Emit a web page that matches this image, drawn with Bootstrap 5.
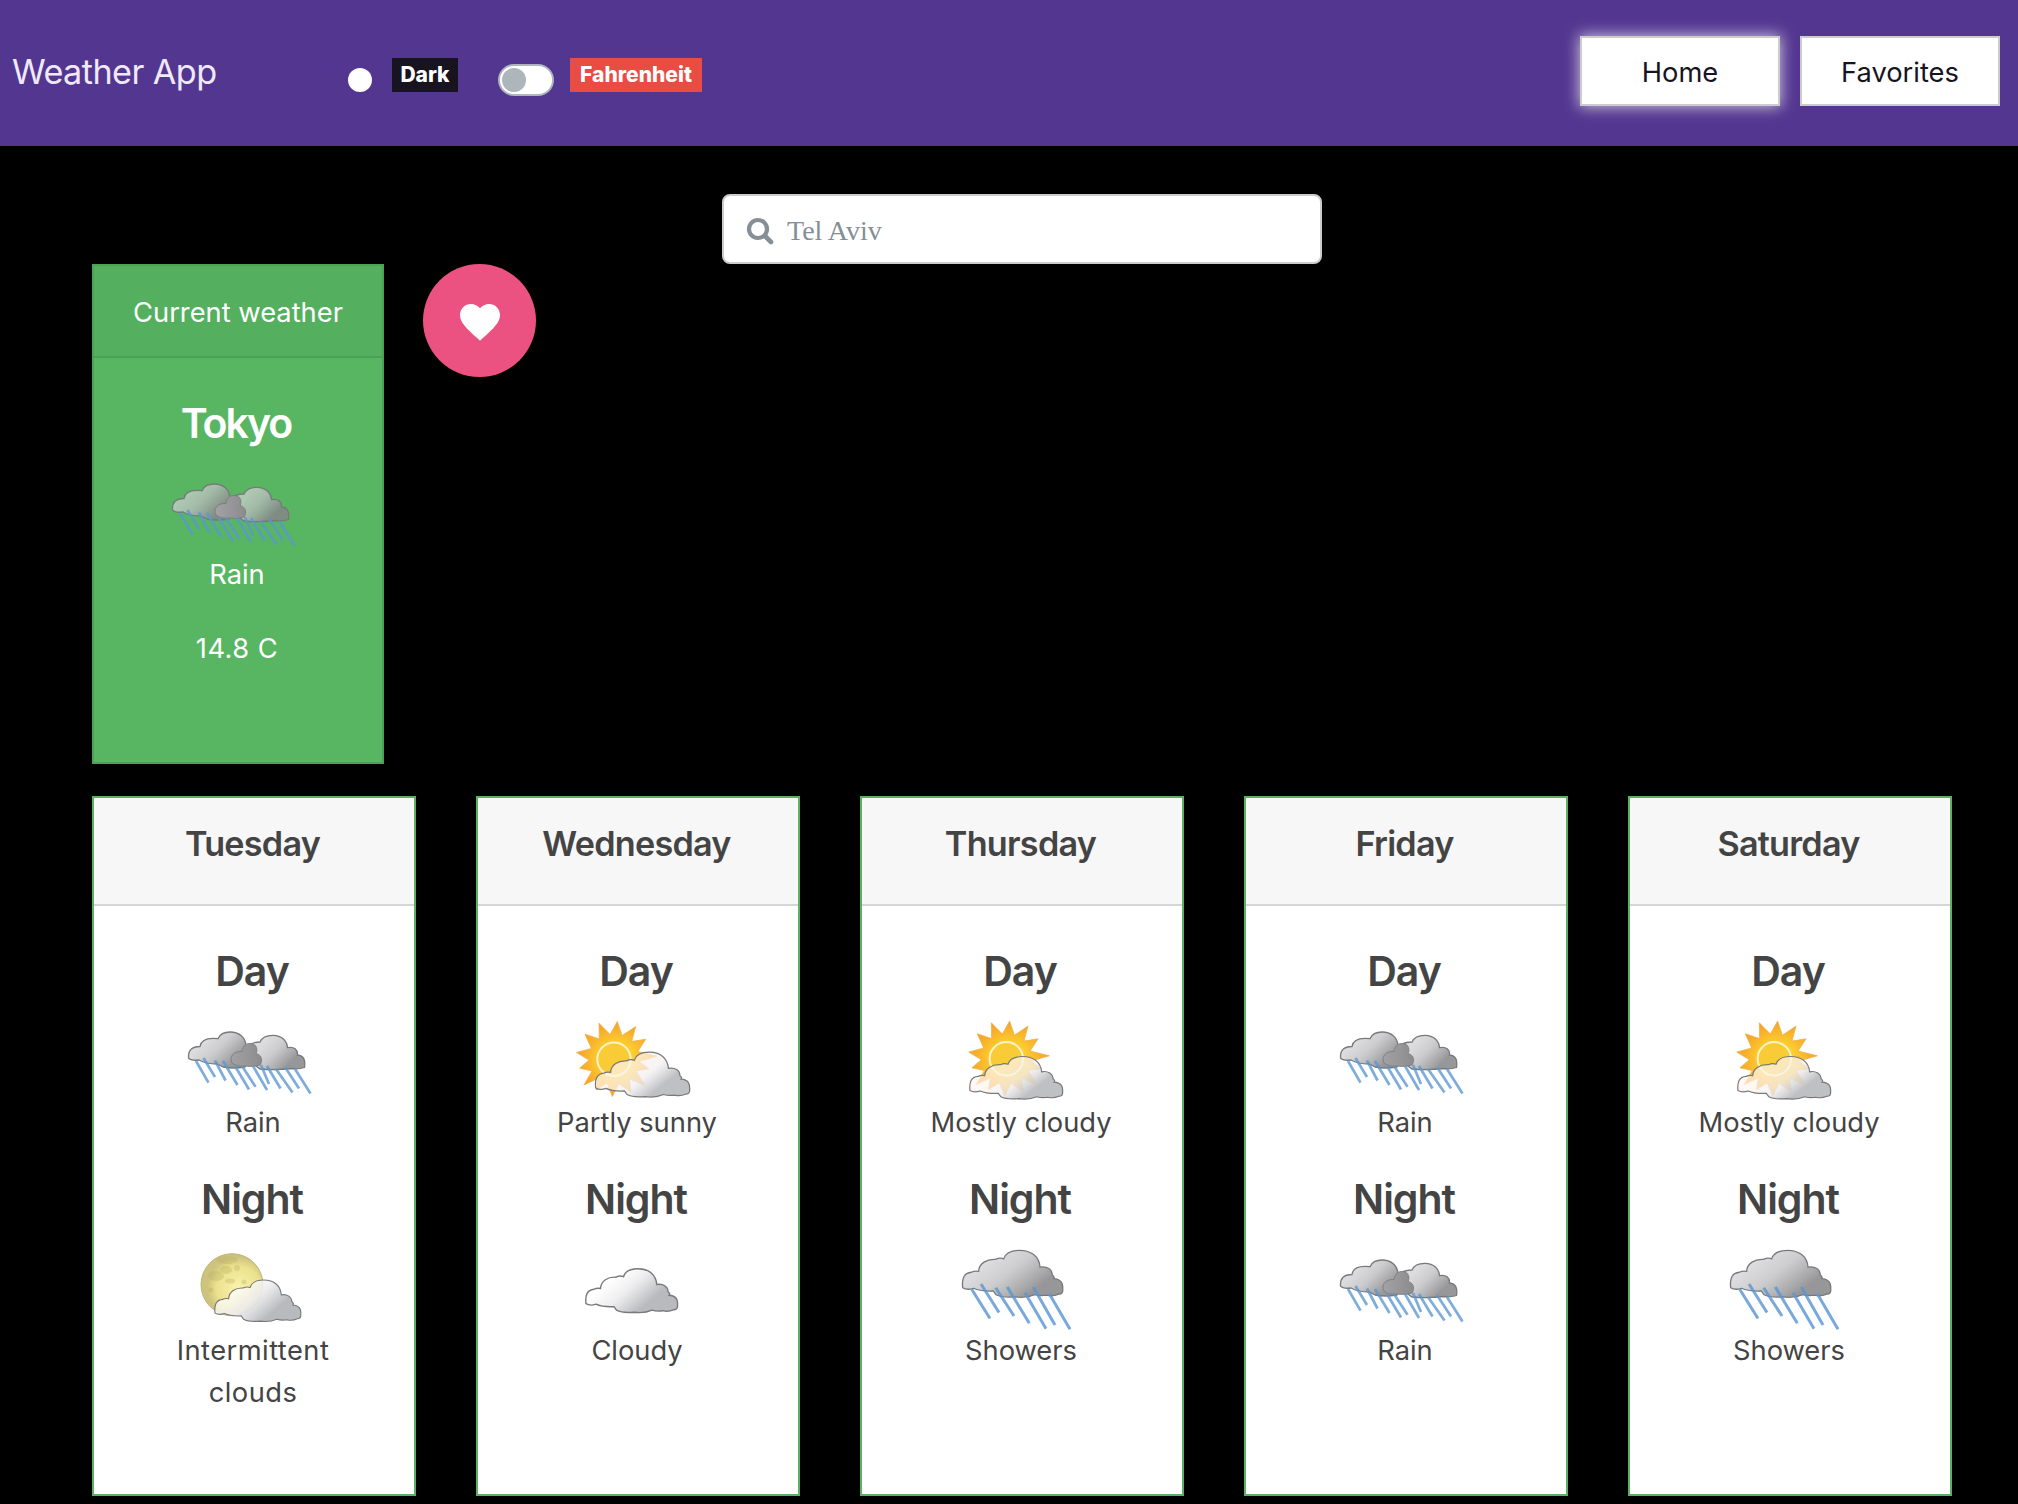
<!DOCTYPE html>
<html lang="en">
<head>
<meta charset="utf-8">
<meta name="viewport" content="width=device-width, initial-scale=1">
<title>Weather App</title>
<link href="https://cdn.jsdelivr.net/npm/bootstrap@5.3.0/dist/css/bootstrap.min.css" rel="stylesheet">
<style>
body{background:#000;font-family:Inter,"Liberation Sans",sans-serif;font-size:27.3px;line-height:42px;color:#444;height:1504px;overflow:hidden}
.top-bar{height:146px;background:#533690;padding:0 18px 0 12px}
.brand-name{font-size:34.2px;color:#efe9fa;width:308px;line-height:42px;margin-bottom:2px;letter-spacing:-.55px;white-space:nowrap}
.toggle-box{width:56px;height:32px;border-radius:16px;border:2px solid #adb5bd;background:#fff;padding:2px;margin-top:14px}
.toggle-box i{display:block;width:24px;height:24px;border-radius:50%;background:#adb5bd}
.toggle-box.on{border-color:#533690;background:#533690}
.toggle-box.on i{background:#fff;margin-left:auto}
.tag{height:34px;line-height:34px;font-size:21px;font-weight:800;color:#fff;border-radius:0;margin-top:4px;margin-left:16px;text-align:center}
.tag-dark{background:#17141f;width:66px;margin-right:40px}
.tag-red{background:#e94c42;width:132px}
.nav-group{gap:20px}
.nav-btn{width:200px;height:70px;border:2px solid #ccc;border-radius:0;background:#fff;color:#17141f;font-size:27.3px;line-height:42px;margin-bottom:4px;padding:3px 0 0}
.nav-btn.glow{box-shadow:0 0 14px 1px rgba(255,255,255,.7)}
.search-box{width:600px;height:70px;margin:48px 0 0 722px;border:2px solid #ccc;border-radius:8px;background:#fff;color:#868e96;font-family:"Liberation Serif",serif;font-size:28px;padding-left:22px}
.search-box svg{margin-top:4px}
.search-text{margin-left:13px;padding-top:4px}
.page-body{padding:0 66px 0 92px}
.now-row{height:508px}
.now-card{width:292px;height:500px;background:#58b662;border:2px solid #4ba257;border-radius:0;color:#fff}
.now-card .card-header{height:92px;padding:26px 0 0;background:#54b05e;border-bottom:2px solid #4ba257;border-radius:0}
.day-card{width:324px;height:700px;border:2px solid #5cb066;border-radius:0;color:#444;background:#fff}
.day-card .card-header{height:108px;padding:25px 3px 0 0;background:#f7f7f7;border-bottom:2px solid #d6d6d6;border-radius:0;font-size:34.2px;font-weight:600;letter-spacing:-.75px}
.card-body{padding:35px 33px 0 31px}
.part-title{font-size:41px;font-weight:600;line-height:50px;margin:0;padding:5px 2px 17px 0;letter-spacing:-1.05px}
.city-title{letter-spacing:-2px}
.wx{display:block;width:150px;height:90px;margin:0 auto -1px;overflow:visible}
.wx-text{margin:0 auto 25px;max-width:200px}
.wx-wide{letter-spacing:.45px}
.now-card .wx-text{margin-bottom:32px}
.fav-btn{width:113px;height:113px;border-radius:50%;background:#eb5282;border:0;margin:-.5px 0 0 39px;padding:3px 0 0}
</style>
</head>
<body>
<svg width="0" height="0" class="position-absolute">
<defs>
<linearGradient id="gWhite" x1="0" y1="0" x2="1" y2=".55"><stop offset=".3" stop-color="#fff" stop-opacity=".72"/><stop offset=".55" stop-color="#ececee" stop-opacity=".9"/><stop offset=".85" stop-color="#b9babd"/></linearGradient>
<linearGradient id="gMist" x1="0" y1="0" x2="1" y2=".6"><stop offset=".4" stop-color="#fff5ef" stop-opacity=".7"/><stop offset=".62" stop-color="#f2f0f2" stop-opacity=".76"/><stop offset=".85" stop-color="#bfc0c3"/></linearGradient>
<linearGradient id="gGrey" x1="0" y1="0" x2="1" y2=".6"><stop offset=".3" stop-color="#cfcfd1" stop-opacity=".72"/><stop offset=".55" stop-color="#bcbcbe" stop-opacity=".75"/><stop offset=".9" stop-color="#858587" stop-opacity=".85"/></linearGradient>
<linearGradient id="gDark" x1="0" y1="0" x2="1" y2="0"><stop offset="0" stop-color="#a2a2a4"/><stop offset="1" stop-color="#8c8c8e"/></linearGradient>
<radialGradient id="gSun"><stop offset=".4" stop-color="#fdd02f"/><stop offset="1" stop-color="#f5a02a"/></radialGradient>
<radialGradient id="gMoon" cx=".6" cy=".55"><stop offset="0" stop-color="#fbf3ad"/><stop offset=".7" stop-color="#ece18d"/><stop offset="1" stop-color="#cdc37c"/></radialGradient>
<path id="cloud" d="M0 35C-1 27 1 21 8 20.500Q11 19 14.500 19.800C15 12 22 8 30 8.500Q34 6.500 37.500 8C39 3 44 0 52 0C63 0 70 6 70.800 15.800C77 14.500 82 18 82 23Q84.500 25 83.200 26.500C90 27 92 31 91.500 36Q92 41 88 41Q82 43.500 77 42Q71 43 66 41.500Q58 45 48 43.500Q36 44.500 30.500 41.500L28 38Q16 38.500 10 35.500Q4 37.500 0 35Z"/>
<symbol id="wx-rain" viewBox="0 0 150 90">
<g stroke="#77797b" stroke-width="1.300">
<path fill="url(#gGrey)" d="M68 34Q72 29 81 29C83 24 88 22.300 94 22.300C103 22.300 108 28 108.500 34.700C115 33 119 37 118.500 42C125 42.500 126.500 47 125.500 54.500Q119 56.500 113 55.500Q97 57.500 81 56L77 53Z"/>
<path fill="url(#gGrey)" d="M9.500 45C9 37 13 33.500 21 33.500C22 27 29 24.500 39 25.700C41 21 46 19 51 19C60 19 66 24 67 32L72 40L66 54Q54 56 44 54L38 51Q27 51 20 47Q12 48 9.500 45Z"/>
<path fill="url(#gDark)" stroke-width=".8" d="M53 50C50 44 54 38 63 38.500C64 32 68 30 72 30.500C78 31 79 37 77 40.500C83 42 84 48 81 52Q73 54.500 66 53Q58 54 53 50Z"/></g>
<path stroke="#5b97d3" stroke-width="2.700" opacity=".78" d="M17 48L29.500 69.700M24.500 45L36 64M36 47.500L46.500 67.500M44 48L58.500 72M56 53L70 76.500M63 53L76.500 73.700M74 53L88 77M82 52L90 71M88 53L101.500 75.500M97 56L113.500 79.500M106 54L120 75.500M116 56L131.500 80.500"/>
</symbol>
<symbol id="wx-showers" viewBox="0 0 150 90">
<use href="#cloud" transform="translate(16.700 9.300) scale(1.093 1.070)" fill="url(#gGrey)" stroke="#77797b" stroke-width="1.200"/>
<path stroke="#5b97d3" stroke-width="3" opacity=".82" d="M25.700 48.300L44 77.500M35 43L53 71.500M49.700 46.700L68 75M61.300 46L83.300 82.300M79 51.700L100 87.700M87.300 46L109 84M103.300 52.700L124 88.300"/>
</symbol>
<symbol id="wx-cloudy" viewBox="0 0 150 90"><use href="#cloud" x="24" y="27.700" fill="url(#gWhite)" stroke="#77797b" stroke-width="1.400"/></symbol>
<g id="sun"><path fill="url(#gSun)" stroke="#f3b04a" stroke-width=".8" d="M-37.500-6.700L-22.600-10.800L-29-25L-14.700-20.200L-15-36L-3.900-24.700L3.300-37.700L8.100-23.600L21.700-32.700L17.700-17.700L31.700-20L23.800-7.700L43-3L24.900 2.200L35 9.700L22 11.700L31 26.300L15.400 19.700L17 33L4.800 24.500L-1.700 37.300L-6.900 24L-17.700 30.700L-16 19.200L-30 25.700L-22 11.700L-34.300 9L-25 .9Z"/><circle r="16.700" fill="#f9cb35" stroke="#fff3c8" stroke-width="2"/></g>
<symbol id="wx-partly" viewBox="0 0 150 90"><use href="#sun" x="52" y="46.200"/><use href="#cloud" transform="translate(33.700 39.200) scale(1.027 1.020)" fill="url(#gMist)" stroke="#77797b" stroke-width="1.200"/></symbol>
<symbol id="wx-mostly" viewBox="0 0 150 90"><use href="#sun" x="60.300" y="45.800"/><use href="#cloud" transform="translate(24 43.500) scale(1.012 .97)" fill="url(#gMist)" stroke="#77797b" stroke-width="1.200"/></symbol>
<symbol id="wx-moon" viewBox="0 0 150 90"><circle cx="54" cy="43.700" r="31" fill="url(#gMoon)" stroke="#bdb67c" stroke-width="1"/>
<g fill="#b9ae62" opacity=".32"><ellipse cx="49" cy="19" rx="11" ry="4"/><ellipse cx="38" cy="35" rx="8" ry="5"/><ellipse cx="48" cy="29" rx="6" ry="4"/><circle cx="59" cy="27" r="3"/><ellipse cx="52" cy="40" rx="5" ry="2.500"/><circle cx="66" cy="41" r="2.500"/><circle cx="33" cy="49" r="2.500"/></g>
<use href="#cloud" transform="translate(37 39) scale(.937 .945)" fill="url(#gWhite)" stroke="#77797b" stroke-width="1.200"/></symbol>
</defs></svg>

<nav class="top-bar d-flex align-items-center">
<div class="brand-name">Weather App</div>
<div class="toggle-box on"><i></i></div><span class="badge p-0 tag tag-dark">Dark</span>
<div class="toggle-box"><i></i></div><span class="badge p-0 tag tag-red">Fahrenheit</span>
<div class="d-flex ms-auto nav-group"><button class="btn nav-btn glow">Home</button><button class="btn nav-btn">Favorites</button></div>
</nav>
<div class="search-box d-flex align-items-center">
<svg width="28" height="28" viewBox="0 0 28 28" fill="none" stroke="#868e96"><circle cx="12" cy="12" r="9" stroke-width="4.200"/><path d="M19 19L25 25" stroke-width="4.600" stroke-linecap="round"/></svg>
<span class="search-text">Tel Aviv</span></div>
<main class="page-body">
<div class="d-flex align-items-start mb-4 now-row">
<div class="card now-card text-center"><div class="card-header">Current weather</div>
<div class="card-body"><h4 class="part-title city-title">Tokyo</h4><svg class="wx"><use href="#wx-rain" x="1"/></svg><p class="wx-text">Rain</p><p class="wx-text wx-wide">14.8 C</p></div></div>
<button class="btn fav-btn d-flex align-items-center justify-content-center" aria-label="Add to favorites"><svg width="48" height="48" viewBox="0 0 24 24" fill="#fff"><path d="M12 21.350l-1.450-1.320C5.400 15.360 2 12.280 2 8.500 2 5.420 4.420 3 7.500 3c1.740 0 3.410.81 4.500 2.090C13.090 3.810 14.760 3 16.500 3 19.580 3 22 5.420 22 8.500c0 3.780-3.400 6.860-8.550 11.540L12 21.350z"/></svg></button>
</div>
<div class="d-flex justify-content-between">
<div class="card day-card text-center"><div class="card-header">Tuesday</div><div class="card-body"><h4 class="part-title">Day</h4><svg class="wx"><use href="#wx-rain" x="1"/></svg><p class="wx-text">Rain</p><h4 class="part-title">Night</h4><svg class="wx"><use href="#wx-moon"/></svg><p class="wx-text wx-wide">Intermittent clouds</p></div></div>
<div class="card day-card text-center"><div class="card-header">Wednesday</div><div class="card-body"><h4 class="part-title">Day</h4><svg class="wx"><use href="#wx-partly"/></svg><p class="wx-text">Partly sunny</p><h4 class="part-title">Night</h4><svg class="wx"><use href="#wx-cloudy"/></svg><p class="wx-text">Cloudy</p></div></div>
<div class="card day-card text-center"><div class="card-header">Thursday</div><div class="card-body"><h4 class="part-title">Day</h4><svg class="wx"><use href="#wx-mostly"/></svg><p class="wx-text">Mostly cloudy</p><h4 class="part-title">Night</h4><svg class="wx"><use href="#wx-showers"/></svg><p class="wx-text">Showers</p></div></div>
<div class="card day-card text-center"><div class="card-header">Friday</div><div class="card-body"><h4 class="part-title">Day</h4><svg class="wx"><use href="#wx-rain" x="1"/></svg><p class="wx-text">Rain</p><h4 class="part-title">Night</h4><svg class="wx"><use href="#wx-rain" x="1"/></svg><p class="wx-text">Rain</p></div></div>
<div class="card day-card text-center"><div class="card-header">Saturday</div><div class="card-body"><h4 class="part-title">Day</h4><svg class="wx"><use href="#wx-mostly"/></svg><p class="wx-text">Mostly cloudy</p><h4 class="part-title">Night</h4><svg class="wx"><use href="#wx-showers"/></svg><p class="wx-text">Showers</p></div></div>
</div>
</main>
<script src="https://cdn.jsdelivr.net/npm/bootstrap@5.3.0/dist/js/bootstrap.bundle.min.js"></script>
</body>
</html>
